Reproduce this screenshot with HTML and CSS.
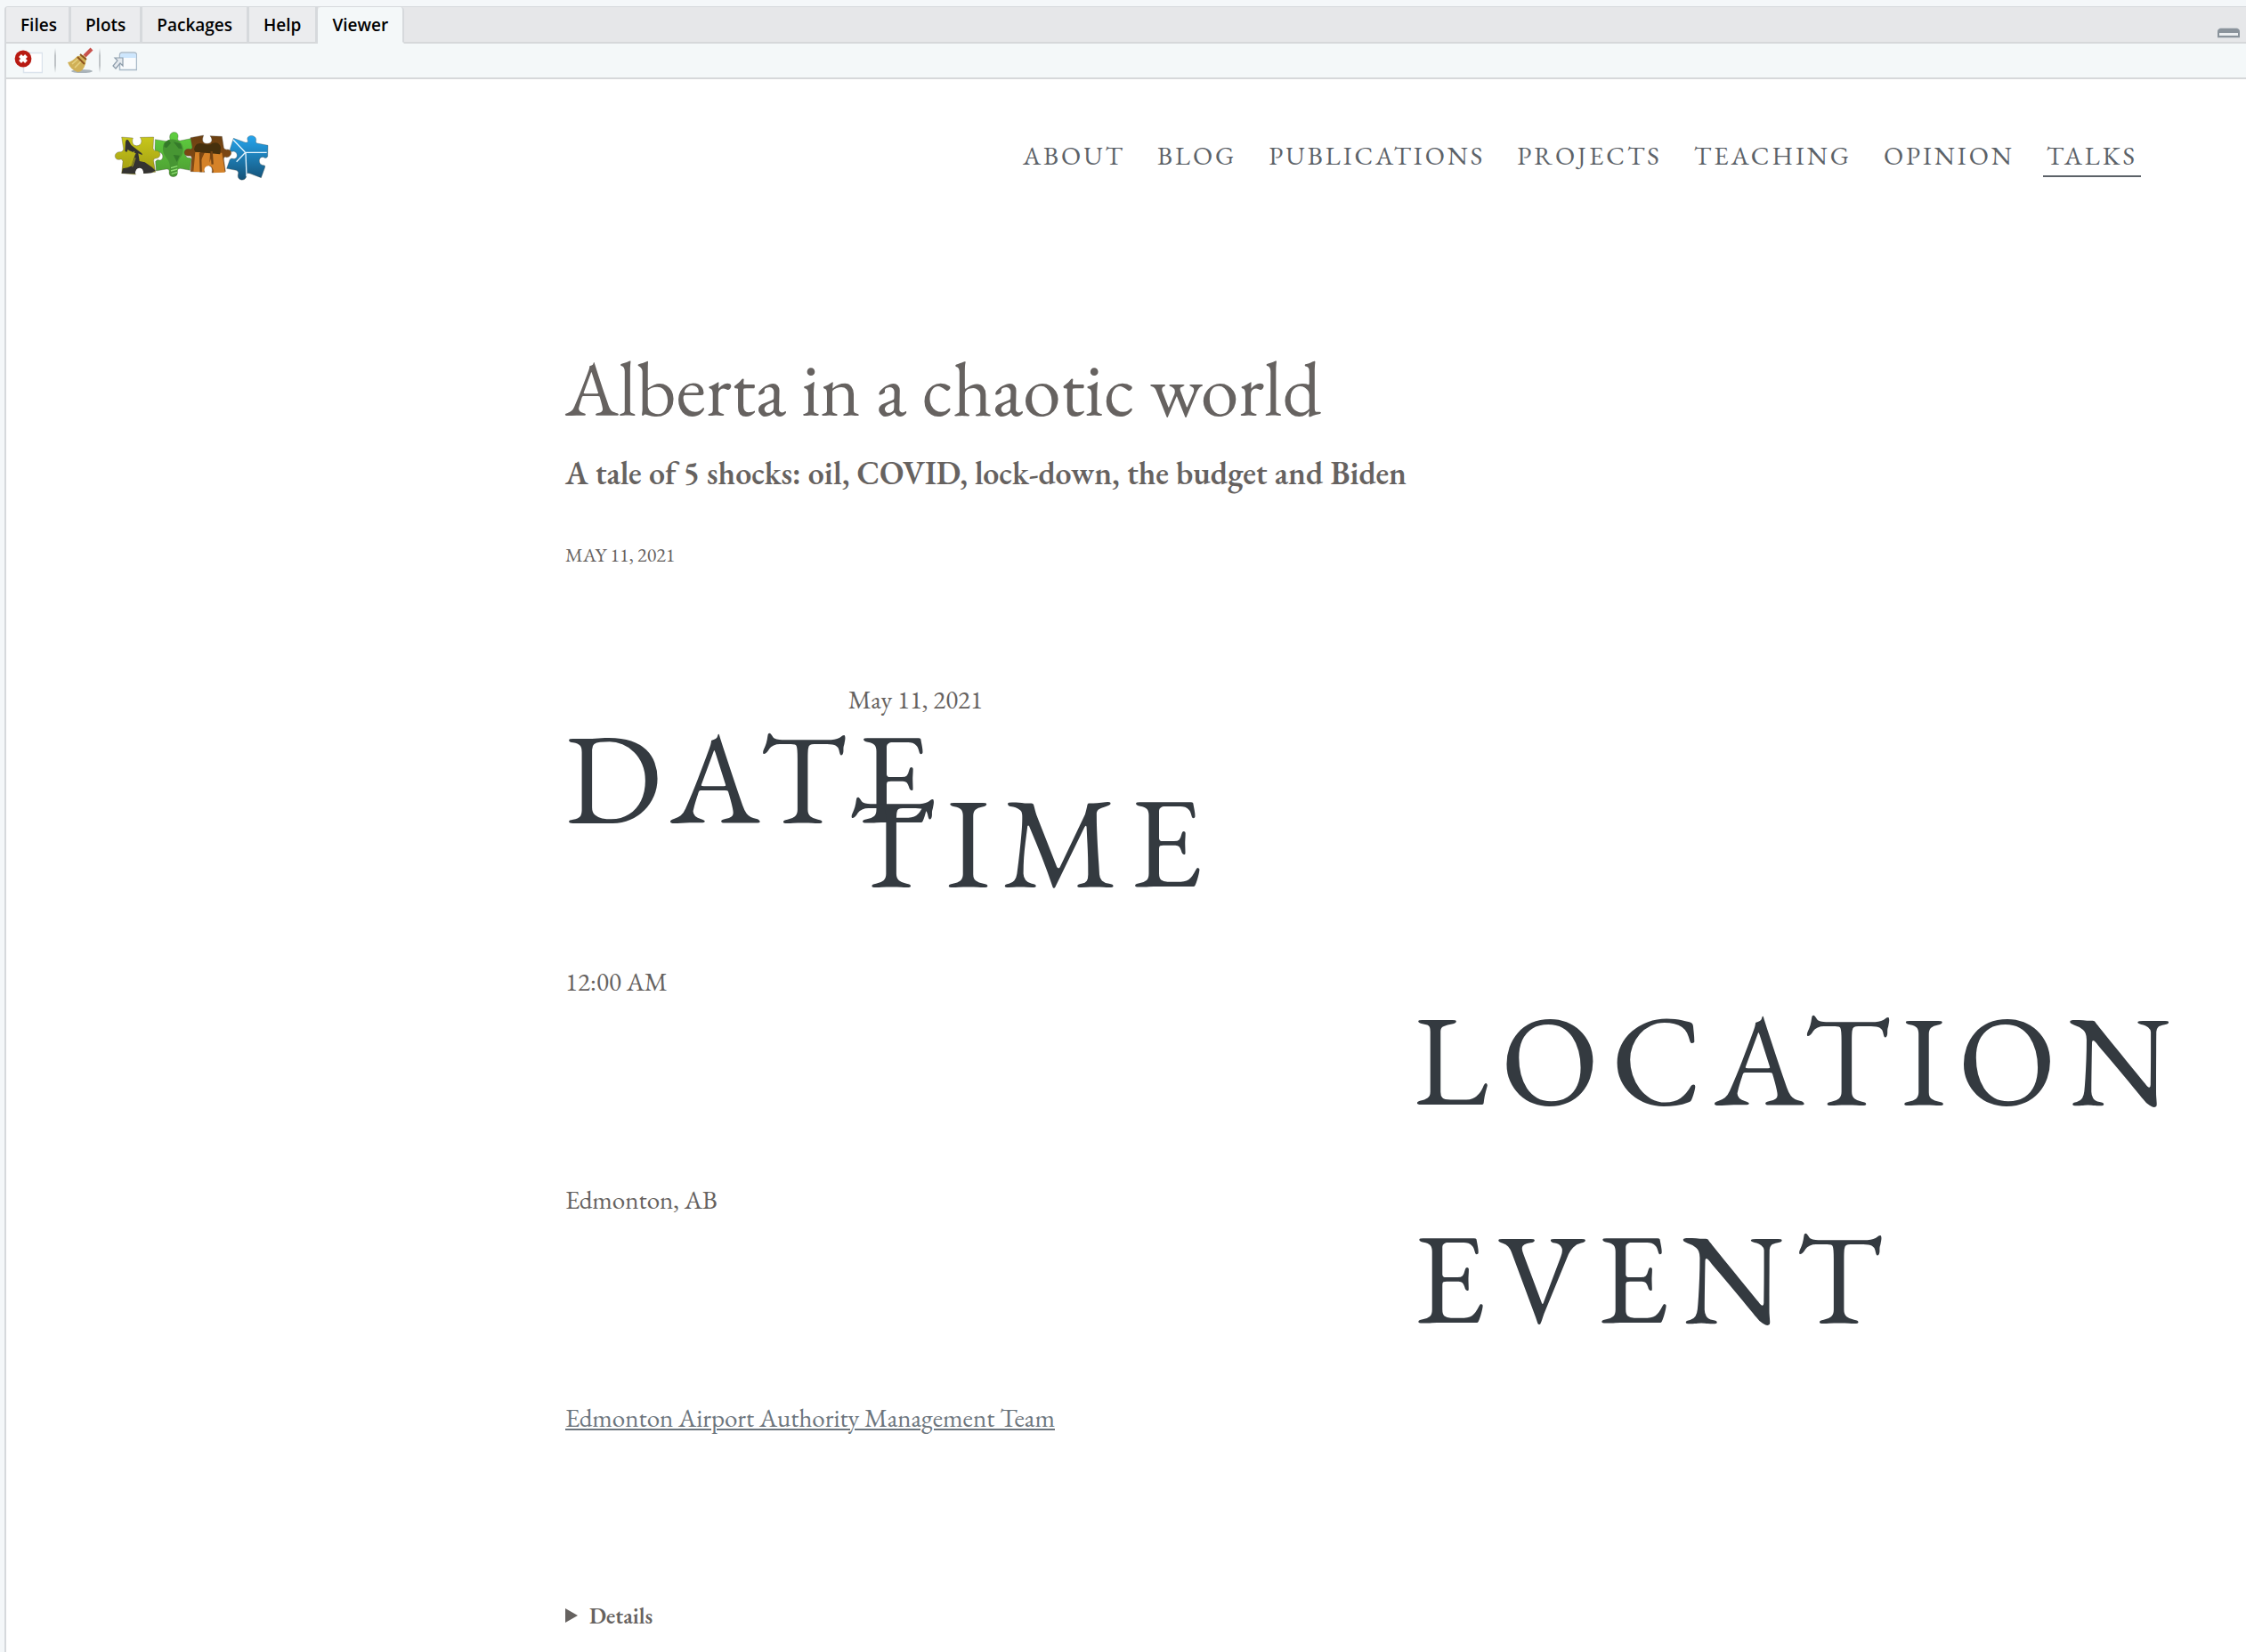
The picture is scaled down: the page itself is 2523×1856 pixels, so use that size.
FILE: index.html
```html
<!DOCTYPE html>
<html lang="en">
<head>
<meta charset="utf-8">
<title>Alberta in a chaotic world</title>
<link rel="stylesheet" href="styles.css">
</head>
<body>
<div class="pane">
  <div class="tabs" role="tablist">
    <button class="tab" role="tab">Files</button>
    <button class="tab" role="tab">Plots</button>
    <button class="tab" role="tab">Packages</button>
    <button class="tab" role="tab">Help</button>
    <button class="tab tab-active" role="tab" aria-selected="true">Viewer</button>
    <button class="minimize" aria-label="Minimize">
      <svg width="25" height="16" viewBox="0 0 25 16"><path d="M3 3h19l3 3v9H0V6z" fill="#ccd1d5"/><path d="M4 4h17q4 0 4 4v6H0V8q0-4 4-4z" fill="#8a939b"/><path d="M2 9h21v3H2z" fill="#eceff1"/></svg>
    </button>
  </div>
  <div class="toolbar">
    <button class="tool" aria-label="Remove current viewer item">
      <svg width="32" height="30" viewBox="0 0 32 30"><rect x="10.500" y="6.500" width="21" height="22" fill="#fff" stroke="#dbe3ec" stroke-width="1.500"/><circle cx="10" cy="13" r="9.400" fill="#b81a12"/><path d="M6.500 9.500l7 7M13.500 9.500l-7 7" stroke="#fff" stroke-width="4"/></svg>
    </button>
    <span class="divider"></span>
    <button class="tool" aria-label="Clear all viewer items">
      <svg width="30" height="30" viewBox="0 0 30 30"><ellipse cx="16" cy="27" rx="12" ry="2" fill="#a9b3b9"/><path d="M19 10L27 2" stroke="#c9514c" stroke-width="4"/><path d="M11 10Q4 17 0 17Q3 25 11 28Q17 28 20 19L21 12L18 9Z" fill="#d0b057"/><path d="M5 19l8-7M8 23l8-8" stroke="#e6d080" stroke-width="1.500"/><path d="M11 11l8 8M14 8l7 6" stroke="#8d5420" stroke-width="2"/></svg>
    </button>
    <span class="divider"></span>
    <button class="tool" aria-label="Show in new window">
      <svg width="28" height="24" viewBox="0 -2 28 24"><path d="M8.500 20.500V4q0-3 3-3h13q3 0 3 3v16.500z" fill="#f9fbfd" stroke="#a9bac9" stroke-width="1.500"/><path d="M9 7V4q0-2 3-2h12q3 0 3 2v3z" fill="#cde6fd"/><path d="M3 7h9v9l-3-3-5 6-3-3 5-6z" fill="#e4e9ee" stroke="#8d9dab" stroke-width="1.200"/></svg>
    </button>
  </div>
  <div class="page">
    <header class="site-header">
      <a class="logo" href="#" aria-label="Home">
        <svg width="176" height="57" viewBox="54 49 528 171">
          <defs>
            <linearGradient id="oil" x1="0" y1="0" x2="0" y2="1"><stop offset="0" stop-color="#c8c71b"/><stop offset="1" stop-color="#a09b12"/></linearGradient>
            <linearGradient id="bulb" x1="0" y1="0" x2="0" y2="1"><stop offset="0" stop-color="#5fd03f"/><stop offset="1" stop-color="#4d9c32"/></linearGradient>
            <linearGradient id="city" x1="0" y1="0" x2="0" y2="1"><stop offset="0" stop-color="#6b4012"/><stop offset="1" stop-color="#8d4e14"/></linearGradient>
            <linearGradient id="wind" x1="0" y1="0" x2="0" y2="1"><stop offset="0" stop-color="#25a5ee"/><stop offset="1" stop-color="#155277"/></linearGradient>
          </defs>
          <g stroke="#4a4a45" stroke-opacity=".5" stroke-width="2">
          <path d="M457 74L496 88Q509 90 504 79C500 61 534 61 533 80Q529 92 542 92L573 98L572 136Q566 144 559 138C540 132 538 164 558 165Q566 164 562 174L550 207L513 193Q500 188 500 198C502 220 468 220 472 197Q476 186 466 182L434 176L444 147Q448 139 456 143C472 146 474 122 458 118Q442 122 446 108Z" fill="url(#wind)"/>
          <path d="M193 78L231 84Q246 84 242 72C240 48 274 48 270 70Q266 84 278 82L318 74L320 112Q314 118 306 116C290 116 292 138 306 140Q318 138 314 150L310 182L278 176Q266 176 268 188C270 208 238 210 240 188Q242 176 230 178L196 184L194 152Q200 144 208 148C222 148 222 124 208 122Q192 126 192 110Z" fill="url(#bulb)"/>
          <path d="M80 70L118 73Q112 92 124 98C142 104 154 86 142 71L188 70L186 108Q188 118 198 116C214 118 214 142 194 142Q186 142 188 152L194 188L154 192Q160 176 142 172C122 172 118 188 128 196L80 192L84 152Q82 142 72 146C54 148 52 122 72 120Q84 122 86 110Z" fill="url(#oil)"/>
          <path d="M312 72L356 64Q346 90 366 92C386 92 388 78 378 66L418 68L424 106Q426 114 438 112C456 114 450 138 434 138Q424 134 424 144L430 186L384 190Q388 170 374 166C356 162 352 176 360 188L312 186L316 140Q314 130 306 134C286 134 286 110 306 110Q318 114 318 104Z" fill="url(#city)"/>
          </g>
          <path d="M80 192l4-16 16-3 14-6 10-34 4-8-22-9-5-4-4 9-6-4 2-32q5-12 11-2l8 14 36 28 2 6-14-6 4 26 18 4 24 16 12 12-14 8-26 2q-2-20-14-19-14 0-14 20z" fill="#343331"/>
          <path d="M122 118l-16 49M126 140l-10 30" stroke="#b6b11b" stroke-width="3"/>
          <path d="M219 104c4-38 66-34 68 6 2 26-16 28-18 52l-2 36q-12 10-22 0l-3-36c-4-22-26-28-23-58z" fill="#479633"/>
          <path d="M224 90l14-10 8 10-14 16-9-2zM254 86l24 6 6 18-12-2zM254 130l22 2-10 22z" fill="#347a29"/>
          <path d="M246 174l22-6M246 184l22-6M248 194l20-6" stroke="#90df72" stroke-width="4"/>
          <path d="M322 186l6-66 16 1 0 35 16-34 18 2-2 32 12-33 30 0 10 66-38 1q-2-24-16-24-18 2-16 22z" fill="#d58228"/>
          <path d="M324 112q4-26 28-20 26 8 34-2 22-6 28 14l-2 24-84-8z" fill="#46300d"/>
          <path d="M345 124l2 64M383 118l3 44" stroke="#754413" stroke-width="7"/>
          <path d="M496 121l-40-42M497 122h72M497 122l-30 31M498 124l3 78" stroke="#e8f6ff" stroke-width="4"/>
        </svg>
      </a>
      <nav class="site-nav">
        <a href="#">ABOUT</a>
        <a href="#">BLOG</a>
        <a href="#">PUBLICATIONS</a>
        <a href="#">PROJECTS</a>
        <a href="#">TEACHING</a>
        <a href="#">OPINION</a>
        <a class="current" href="#">TALKS</a>
      </nav>
    </header>
    <main class="talk">
      <h1>Alberta in a chaotic world</h1>
      <p class="subtitle">A tale of 5 shocks: oil, COVID, lock-down, the budget and Biden</p>
      <p class="published">MAY 11, 2021</p>
      <dl class="facts">
        <dt class="date-label">DATE</dt>
        <dd class="date-value">May 11, 2021</dd>
        <dt class="time-label">TIME</dt>
        <dd>12:00 AM</dd>
        <dt>LOCATION</dt>
        <dd>Edmonton, AB</dd>
        <dt>EVENT</dt>
        <dd><a href="#">Edmonton Airport Authority Management Team</a></dd>
      </dl>
      <details>
        <summary>Details</summary>
      </details>
    </main>
  </div>
</div>
</body>
</html>
```
FILE: styles.css
```css
* { box-sizing: border-box; }

body {
  margin: 0;
  background: #f4f7f9;
}

button {
  margin: 0;
  padding: 0;
  border: 0;
  background: none;
}

svg { display: block; fill: none; }

.pane {
  display: flex;
  flex-direction: column;
  min-height: calc(100vh - 7px);
  margin: 7px 0 0 5px;
  border-top: 1px solid #d6d9dc;
  border-left: 2px solid #d6d9dc;
  border-radius: 4px 0 0 0;
  background: #fff;
  overflow-x: hidden;
}

/* Pane tabs */
.tabs {
  display: flex;
  height: 41px;
  background: #e6e7e9;
  box-shadow: inset 0 -2px #d6d8da;
}

.tab {
  padding: 0 16px;
  border-right: 3px solid #d6d9dc;
  border-bottom: 2px solid #d6d8da;
  background: #ebecee;
  color: #000;
  font: 600 19px/38px "Open Sans", "Noto Sans", sans-serif;
}

.tab:first-child { padding-right: 13px; }

.tab-active {
  border-right-width: 2px;
  border-bottom-color: #f4f8f9;
  border-radius: 4px 4px 0 0;
  background: #f4f8f9;
}

.minimize {
  align-self: flex-end;
  margin: 0 7px 5px auto;
}

/* Viewer toolbar */
.toolbar {
  display: flex;
  align-items: center;
  gap: 13px;
  height: 40px;
  padding-left: 9px;
  border-bottom: 2px solid #d6d8da;
  background: #f4f8f9;
}

.divider {
  width: 2px;
  height: 28px;
  background: linear-gradient(#f4f8f9, #bfc4c7 30%, #bfc4c7 70%, #f4f8f9);
}

.divider:nth-of-type(2) { margin-left: -8px; }

/* Web page shown in the viewer */
.page {
  color: #666260;
  font: 29px/48px "EB Garamond", "Liberation Serif", serif;
}

.site-header {
  display: flex;
  align-items: flex-start;
  justify-content: space-between;
  padding: 58px 118px 0 121px;
}

.site-nav {
  display: flex;
  gap: 28px;
  margin-top: 4px;
}

.site-nav a {
  padding: 4px 4px 2px;
  border-bottom: 2px solid transparent;
  color: #5c6268;
  letter-spacing: 3px;
  line-height: 40px;
  text-decoration: none;
}

.site-nav .current { border-bottom-color: #5c6268; }

.talk {
  width: 50.5%;
  margin: 183px 0 0 calc(25% - 1px);
}

h1 {
  margin: 0 0 21px;
  font-size: 86px;
  font-weight: 400;
  line-height: 100px;
}

.subtitle {
  margin: 0 0 52px;
  font-size: 36px;
  font-weight: 600;
}

.published {
  margin: 0;
  font-size: 22px;
  line-height: 32px;
}

.facts {
  display: grid;
  grid-template-columns: repeat(4, minmax(0, 1fr));
  row-gap: 24px;
  margin: 122px 0 180px;
}

.facts dt {
  grid-column: 4;
  padding: 3px 0 2px;
  color: #343a40;
  font-size: 144px;
  letter-spacing: 14px;
  line-height: 216px;
  white-space: nowrap;
}

.facts dd {
  grid-column: 1 / span 3;
  margin: 0;
}

.facts .date-label {
  grid-area: 1 / 1 / span 2;
}

.facts .date-value {
  grid-area: 1 / 2;
}

.facts .time-label { grid-area: 2 / 2; }
.facts .time-label + dd { grid-row: 3; }
.facts .time-label ~ dt { grid-row: 3; }
.facts .time-label ~ dt ~ dd { grid-row: 4; }
.facts .time-label ~ dt ~ dt { grid-row: 4; }
.facts .time-label ~ dt ~ dt ~ dd { grid-row: 5; }

.facts a {
  color: #6c757d;
  text-decoration-thickness: 2px;
  text-underline-offset: 2px;
}

summary {
  display: flex;
  align-items: center;
  gap: 13px;
  font-size: 25px;
  font-weight: 600;
  line-height: 36px;
}

summary::before {
  content: "";
  border-left: 14px solid;
  border-top: 8px solid transparent;
  border-bottom: 8px solid transparent;
}
```
